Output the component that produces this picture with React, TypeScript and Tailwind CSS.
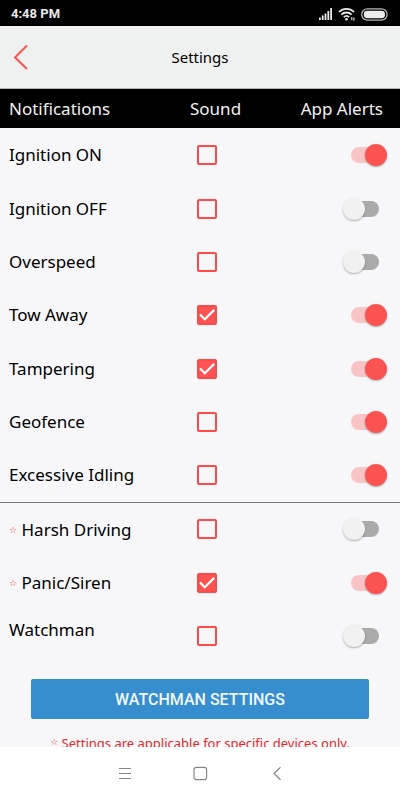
import { useState } from "react";

type Setting = {
  id: string;
  label: string;
  sound: boolean;
  alert: boolean;
  starred?: boolean;
  raised?: boolean;
};

const general: Setting[] = [
  { id: "ignition-on", label: "Ignition ON", sound: false, alert: true },
  { id: "ignition-off", label: "Ignition OFF", sound: false, alert: false },
  { id: "overspeed", label: "Overspeed", sound: false, alert: false },
  { id: "tow-away", label: "Tow Away", sound: true, alert: true },
  { id: "tampering", label: "Tampering", sound: true, alert: true },
  { id: "geofence", label: "Geofence", sound: false, alert: true },
  { id: "idling", label: "Excessive Idling", sound: false, alert: true },
];

const deviceSpecific: Setting[] = [
  { id: "harsh-driving", label: "Harsh Driving", sound: false, alert: false, starred: true },
  { id: "panic", label: "Panic/Siren", sound: true, alert: true, starred: true },
  { id: "watchman", label: "Watchman", sound: false, alert: false, raised: true },
];

export default function App() {
  return (
    <div className="flex h-screen flex-col overflow-hidden bg-[#f7f7f9] font-['Noto_Sans',sans-serif] text-black">
      <StatusBar />

      <header className="grid h-[63px] shrink-0 grid-cols-[1fr_auto_1fr] items-center border-b border-[#b4b4b4] bg-[#eff1f0] px-3">
        <button aria-label="Back" className="flex h-8 w-8 items-center">
          <svg width="18" height="26" viewBox="0 0 18 26" fill="none" stroke="#ff5050" strokeWidth="2" strokeLinecap="round">
            <path d="M14.5 2 L3 13.5 L14.5 24.5" />
          </svg>
        </button>
        <h1 className="text-[15px]">Settings</h1>
      </header>

      <main className="min-h-0 flex-1 overflow-y-auto [scrollbar-width:none]">
        <table className="w-full table-fixed border-collapse text-left text-[17px]">
          <thead>
            <tr className="h-[39px] bg-black text-[#f2f2f2]">
              <th className="w-[47%] pl-[9px] font-normal">Notifications</th>
              <th className="w-[27%] pl-0.5 font-normal">Sound</th>
              <th className="pr-[17px] text-right font-normal whitespace-nowrap">App Alerts</th>
            </tr>
          </thead>
          <tbody>
            {general.map((s) => (
              <SettingRow key={s.id} setting={s} />
            ))}
          </tbody>
          <tbody className="border-t border-[#77777a]">
            {deviceSpecific.map((s) => (
              <SettingRow key={s.id} setting={s} />
            ))}
          </tbody>
        </table>

        <div className="px-[31px] pt-[17px]">
          <button className="h-10 w-full rounded-xs bg-[#378ecf] pt-0.5 font-[Roboto,sans-serif] text-[16px] font-medium text-[#f0f7fc]">
            WATCHMAN SETTINGS
          </button>
        </div>
        <p className="mt-3 text-center text-[13px] leading-6 whitespace-nowrap text-[#e8262b]">
          <Star /> Settings are applicable for specific devices only.
        </p>
      </main>

      <NavBar />
    </div>
  );
}

function SettingRow({ setting }: { setting: Setting }) {
  const [sound, setSound] = useState(setting.sound);
  const [alert, setAlert] = useState(setting.alert);

  return (
    <tr className="h-[53px] nth-[3n+1]:h-[54px]">
      <th scope="row" className={`pl-[9px] font-normal whitespace-nowrap ${setting.raised ? "pb-3" : ""}`}>
        {setting.starred && <Star />}
        {setting.starred && " "}
        {setting.label}
      </th>
      <td className="pl-[9px]">
        <label className="grid h-5 w-5">
          <input
            type="checkbox"
            aria-label={`${setting.label} sound`}
            checked={sound}
            onChange={(e) => setSound(e.target.checked)}
            className="col-start-1 row-start-1 h-5 w-5 appearance-none rounded-xs border-2 border-[#ff4a4a] checked:bg-[#ff5252]"
          />
          {sound && (
            <svg viewBox="0 0 20 20" className="pointer-events-none col-start-1 row-start-1 h-5 w-5" fill="none" stroke="#fff" strokeWidth="2.2">
              <path d="M3 9.5 L7.8 14.3 L17.2 4.9" />
            </svg>
          )}
        </label>
      </td>
      <td className="pr-[13px]">
        <label className="ml-auto flex h-6 w-[45px] items-center">
          <input
            type="checkbox"
            role="switch"
            aria-label={`${setting.label} app alerts`}
            checked={alert}
            onChange={(e) => setAlert(e.target.checked)}
            className="relative mx-auto h-4 w-7 appearance-none rounded-full bg-[#aaaaab] before:absolute before:-top-[3px] before:-left-2 before:h-[22px] before:w-[22px] before:rounded-full before:bg-[#f1f1f2] before:shadow-[0_1px_2px_rgba(0,0,0,0.3)] checked:bg-[#f9c4c6] checked:before:left-[14px] checked:before:bg-[#fa5352]"
          />
        </label>
      </td>
    </tr>
  );
}

function Star() {
  return <span className="align-[3px] font-['DejaVu_Sans',sans-serif] text-[9px] leading-none text-[#e8262b]">☆</span>;
}

function StatusBar() {
  return (
    <div className="flex h-[26px] shrink-0 items-center justify-between bg-black pt-0.5 pr-3 pl-[11px] text-[#e8e8e8]">
      <span className="font-[Roboto,sans-serif] text-[13px] font-bold">4:48 PM</span>
      <div className="flex items-center gap-[5px]">
        <svg width="14" height="12" viewBox="0 0 14 12" fill="currentColor">
          <rect x="0" y="9.5" width="1.8" height="2.5" />
          <rect x="2.8" y="7.5" width="1.8" height="4.5" />
          <rect x="5.6" y="5.5" width="1.8" height="6.5" />
          <rect x="8.4" y="3" width="1.8" height="9" />
          <rect x="11.2" y="0" width="1.8" height="12" />
        </svg>
        <svg width="18" height="14" viewBox="0 0 18 14" fill="none" stroke="currentColor" strokeWidth="1.8">
          <path d="M1 5 C5 0.8 12 0.8 16 5" />
          <path d="M3.4 7.6 C6.2 4.8 10.8 4.8 13.6 7.6" />
          <path d="M5.8 10.2 C7.4 8.6 9.6 8.6 11.2 10.2" />
          <circle cx="8.5" cy="12.2" r="1.3" fill="currentColor" stroke="none" />
          <path d="M13.8 10 V13 M15.9 10.5 V13.8" strokeWidth="1.1" />
        </svg>
        <svg width="27" height="13" viewBox="0 0 27 13" fill="none">
          <rect x="0.7" y="0.9" width="25.4" height="11.2" rx="5.6" stroke="#b5b5b5" strokeWidth="1.3" />
          <rect x="2.8" y="2.8" width="21.2" height="7.4" rx="3.4" fill="#ececec" />
        </svg>
      </div>
    </div>
  );
}

function NavBar() {
  return (
    <nav className="flex h-[53px] shrink-0 items-center justify-center gap-[60px] bg-white text-[#868686]">
      <button aria-label="Recent apps">
        <svg width="16" height="16" viewBox="0 0 16 16" fill="none" stroke="currentColor" strokeWidth="1.2">
          <path d="M3 2.5 H15 M3 7.5 H15 M3 12.5 H15" />
        </svg>
      </button>
      <button aria-label="Home">
        <svg width="16" height="16" viewBox="0 0 16 16" fill="none" stroke="currentColor" strokeWidth="1.2">
          <rect x="2" y="1.3" width="12.6" height="12.4" rx="2.5" />
        </svg>
      </button>
      <button aria-label="Go back">
        <svg width="16" height="16" viewBox="0 0 16 16" fill="none" stroke="currentColor" strokeWidth="1.2">
          <path d="M12.5 1.2 L6 7.5 L12.5 13.8" />
        </svg>
      </button>
    </nav>
  );
}
